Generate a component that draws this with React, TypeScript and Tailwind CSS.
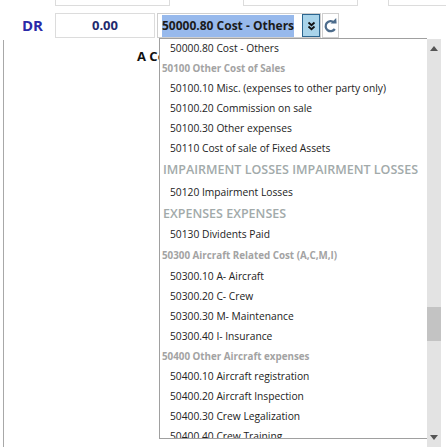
import React from "react";

type Row = { t: "item" | "group" | "head"; text: string; h: number };

const rows: Row[] = [
  { t: "item", text: "50000.80 Cost - Others", h: 20 },
  { t: "group", text: "50100 Other Cost of Sales", h: 20 },
  { t: "item", text: "50100.10 Misc. (expenses to other party only)", h: 20 },
  { t: "item", text: "50100.20 Commission on sale", h: 20 },
  { t: "item", text: "50100.30 Other expenses", h: 20 },
  { t: "item", text: "50110 Cost of sale of Fixed Assets", h: 20 },
  { t: "head", text: "IMPAIRMENT LOSSES IMPAIRMENT LOSSES", h: 23 },
  { t: "item", text: "50120 Impairment Losses", h: 22 },
  { t: "head", text: "EXPENSES EXPENSES", h: 20 },
  { t: "item", text: "50130 Dividents Paid", h: 22 },
  { t: "group", text: "50300 Aircraft Related Cost (A,C,M,I)", h: 21 },
  { t: "item", text: "50300.10 A- Aircraft", h: 20 },
  { t: "item", text: "50300.20 C- Crew", h: 20 },
  { t: "item", text: "50300.30 M- Maintenance", h: 20 },
  { t: "item", text: "50300.40 I- Insurance", h: 20 },
  { t: "group", text: "50400 Other Aircraft expenses", h: 20 },
  { t: "item", text: "50400.10 Aircraft registration", h: 20 },
  { t: "item", text: "50400.20 Aircraft Inspection", h: 20 },
  { t: "item", text: "50400.30 Crew Legalization", h: 20 },
  { t: "item", text: "50400.40 Crew Training", h: 20 },
];

function ListRow({ r }: { r: Row }) {
  if (r.t === "item")
    return (
      <div className="flex items-center pl-[10px] text-[10.25px] text-[#222] whitespace-nowrap" style={{ height: r.h }}>
        {r.text}
      </div>
    );
  if (r.t === "group")
    return (
      <div className="flex items-center pl-[2px] text-[9.8px] font-bold text-[#a3a3a3] whitespace-nowrap" style={{ height: r.h }}>
        {r.text}
      </div>
    );
  return (
    <div className="flex items-center pl-[3px] text-[12.5px] font-semibold text-[#a2aaaa] whitespace-nowrap" style={{ height: r.h }}>
      {r.text}
    </div>
  );
}

export default function App() {
  return (
    <div
      className="relative w-[446px] h-[447px] overflow-hidden bg-white"
      style={{ fontFamily: '"Open Sans", "Noto Sans", sans-serif' }}
    >
      {/* partial row of inputs at top */}
      <div className="flex h-[6px]">
        <div className="ml-[55px] w-[120px] h-[6px] border border-t-0 border-[#dcdcdc]" />
        <div className="ml-[73px] w-[120px] h-[6px] border border-t-0 border-[#dcdcdc]" />
        <div className="ml-[30px] w-[60px] h-[6px] border border-t-0 border-r-0 border-[#dcdcdc]" />
      </div>

      {/* DR row */}
      <div className="flex items-center mt-[7px] h-[25px]">
        <div className="w-[55px] pl-[22px] text-[15px] font-bold text-[#2a2aa8]">DR</div>
        <div className="w-[100px] h-[25px] border border-[#dcdcdc] flex items-center justify-center text-[13px] font-bold text-[#1f2a6e]">
          0.00
        </div>
        <div className="ml-[2px] w-[164px] h-[25px] flex border border-[#cfcfcf]">
          <div className="flex-1 flex items-center pl-[4px]">
            <span className="bg-[#97b9ec] text-[12px] font-bold text-[#1b1b1b] leading-[22px] whitespace-nowrap">
              50000.80 Cost - Others
            </span>
          </div>
          <div className="w-[18px] h-full bg-[#a9d4ea] border border-[#2c6690] flex items-center justify-center">
            <svg width="9" height="10" viewBox="0 0 9 10">
              <path d="M1.5 1.5 L4.5 4.2 L7.5 1.5" fill="none" stroke="#111" strokeWidth="1.8" />
              <path d="M1.5 5.5 L4.5 8.2 L7.5 5.5" fill="none" stroke="#111" strokeWidth="1.8" />
            </svg>
          </div>
        </div>
        <div className="ml-[1px] w-[17px] h-[25px] border border-[#cfcfcf] bg-white flex items-center justify-center">
          <svg width="13" height="17" viewBox="0 0 13 17">
            <path d="M10 5.5 A5 5 0 1 0 10.8 12" fill="none" stroke="#4d6c8c" strokeWidth="2.3" />
            <path d="M6.6 6.4 L12.6 6.6 L12.2 1 Z" fill="#4d6c8c" />
          </svg>
        </div>
      </div>

      {/* panel below with left border */}
      <div className="mt-[2px] ml-[3px] h-[410px] border-l border-[#a8a8a8]">
        <div className="pl-[133px] pt-[8px] text-[13px] font-bold text-[#111] leading-[16px]">A Co</div>
      </div>

      {/* dropdown list */}
      <div className="absolute left-[159px] top-[38px] w-[268px] h-[401px] bg-white border-l border-t border-b border-[#a0a0a0] overflow-hidden">
        {rows.map((r, i) => (
          <ListRow key={i} r={r} />
        ))}
      </div>

      {/* scrollbar */}
      <div className="absolute left-[427px] top-[39px] w-[14px] h-[408px] bg-[#e3e3e3] flex flex-col items-center">
        <div className="h-[18px] flex items-center justify-center">
          <svg width="8" height="5" viewBox="0 0 8 5">
            <path d="M0 5 L4 0 L8 5 Z" fill="#555" />
          </svg>
        </div>
        <div className="mt-[250px] w-[14px] h-[34px] bg-[#c3c3c3]" />
        <div className="mt-[89px] h-[14px] flex items-center justify-center">
          <svg width="8" height="5" viewBox="0 0 8 5">
            <path d="M0 0 L4 5 L8 0 Z" fill="#555" />
          </svg>
        </div>
      </div>
    </div>
  );
}
